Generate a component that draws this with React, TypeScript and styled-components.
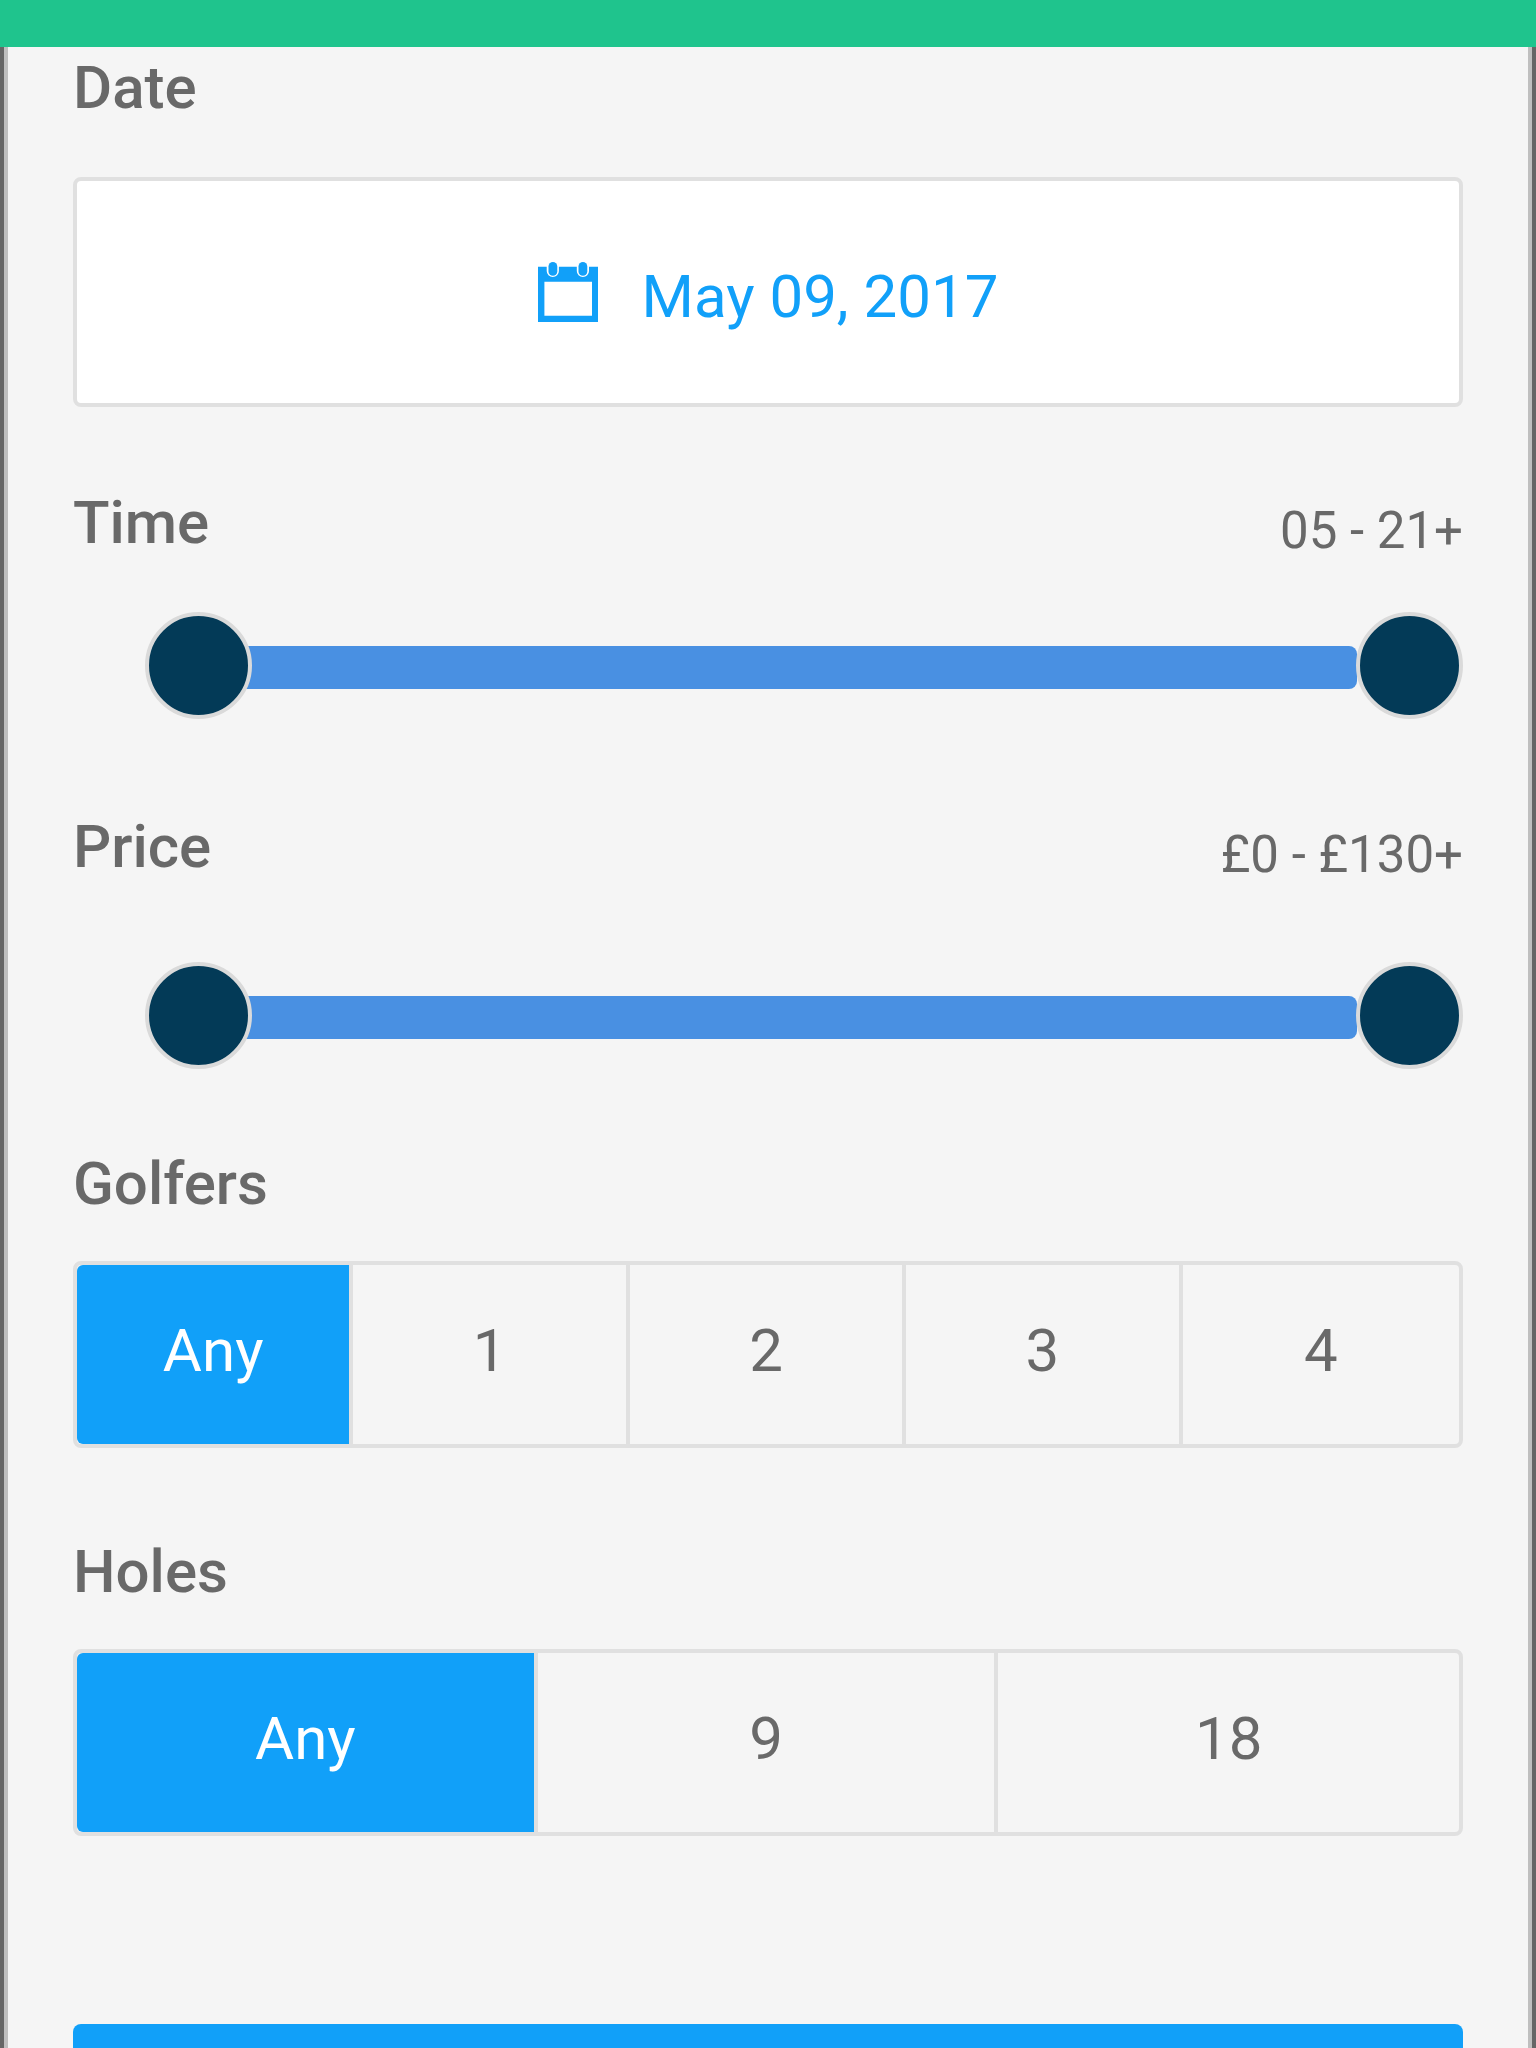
import React, { useState } from "react";
import styled, { createGlobalStyle } from "styled-components";

const color = {
  green: "#1fc48d",
  blue: "#11a0f9",
  track: "#4990e2",
  thumb: "#033a57",
  thumbEdge: "#dadada",
  line: "#e0e0e0",
  text: "#696969",
  surface: "#f5f5f5",
  edge: "#bfbfbf",
  frame: "#666666",
};

const THUMB = 107;

const GlobalStyle = createGlobalStyle`
  *, *::before, *::after { box-sizing: border-box; }
  body {
    margin: 0;
    background: ${color.frame};
    font-family: Roboto, "Liberation Sans", sans-serif;
  }
`;

const Screen = styled.div`
  display: flex;
  flex-direction: column;
  height: 100vh;
`;

const TopBar = styled.header`
  flex: none;
  height: 47px;
  background: ${color.green};
`;

const Panel = styled.main`
  flex: 1;
  min-height: 0;
  margin: 0 4px;
  border: solid ${color.edge};
  border-width: 0 4px;
  padding: 6px 65px 65px;
  background: ${color.surface};
  overflow-y: auto;
  scrollbar-width: none;
`;

const Section = styled.section<{ $space?: number }>`
  display: flex;
  flex-direction: column;
  margin-top: ${(p) => p.$space ?? 0}px;
`;

const Group = styled.fieldset<{ $space: number }>`
  margin: ${(p) => p.$space}px 0 0;
  border: 0;
  padding: 0;
  min-width: 0;
`;

const Heading = styled.h2`
  margin: 0;
  font-size: 60px;
  font-weight: 500;
  line-height: 70px;
  color: ${color.text};
`;

const Legend = styled.legend`
  padding: 0;
  margin-bottom: 42px;
  font-size: 60px;
  font-weight: 500;
  line-height: 70px;
  color: ${color.text};
`;

const HeadingRow = styled.div`
  display: flex;
  justify-content: space-between;
  align-items: flex-start;
`;

const RangeValue = styled.output`
  font-size: 51px;
  line-height: 86px;
  color: ${color.text};
`;

const DateButton = styled.button`
  display: flex;
  justify-content: center;
  align-items: flex-start;
  gap: 44px;
  margin-top: 54px;
  border: 4px solid ${color.line};
  border-radius: 8px;
  padding: 81px 0 71px;
  background: #ffffff;
  color: ${color.blue};
  font: inherit;
  font-size: 60px;
  line-height: 70px;
  cursor: pointer;
`;

const Slider = styled.div<{ $space: number }>`
  display: grid;
  margin: ${(p) => p.$space}px 0 0 72px;
  height: ${THUMB}px;

  & > * {
    grid-area: 1 / 1;
  }
`;

const Rail = styled.div`
  height: 43px;
  margin: 34px ${THUMB - 1}px 0 0;
  padding-left: 53px;
`;

const Fill = styled.div`
  height: 100%;
  border-radius: 8px;
  background: ${color.track};
`;

const Handle = styled.input`
  appearance: none;
  width: 100%;
  height: ${THUMB}px;
  margin: 0;
  background: transparent;
  pointer-events: none;
  z-index: 1;

  &::-webkit-slider-thumb {
    appearance: none;
    width: ${THUMB}px;
    height: ${THUMB}px;
    border: 4px solid ${color.thumbEdge};
    border-radius: 50%;
    background: ${color.thumb};
    pointer-events: auto;
    cursor: pointer;
  }
`;

const Segments = styled.div`
  display: grid;
  grid-auto-flow: column;
  grid-auto-columns: minmax(0, 1fr);
  height: 187px;
  border: 4px solid ${color.line};
  border-radius: 8px;
  overflow: hidden;
`;

const Segment = styled.label`
  display: flex;
  align-items: center;
  justify-content: center;
  padding-bottom: 8px;
  font-size: 60px;
  line-height: 70px;
  color: ${color.text};
  cursor: pointer;

  &:not(:last-child) {
    border-right: 4px solid ${color.line};
  }

  &:first-child {
    border-radius: 6px 0 0 6px;
  }

  &:has(input:checked) {
    background: ${color.blue};
    background-clip: padding-box;
    color: #ffffff;
  }
`;

const HiddenRadio = styled.input`
  appearance: none;
  width: 0;
  height: 0;
  margin: 0;
`;

const SubmitButton = styled.button`
  display: block;
  width: 100%;
  height: 187px;
  margin-top: 188px;
  border: 0;
  border-radius: 8px;
  background: ${color.blue};
  cursor: pointer;
`;

function CalendarIcon() {
  return (
    <svg width="60" height="60" viewBox="0 0 60 60" fill="currentColor" aria-hidden="true">
      <path
        fillRule="evenodd"
        d="M0 4.7H8.7V9A6.1 6.1 0 0 0 20.9 9V4.7H38.8V9A6.1 6.1 0 0 0 51 9V4.7H60V60H0ZM6.4 19.7V53.7H54V19.7Z"
      />
      <rect x="10.5" y="0" width="8.8" height="13.8" rx="4.4" />
      <rect x="40.5" y="0" width="8.8" height="13.8" rx="4.4" />
    </svg>
  );
}

type RangeProps = {
  title: string;
  max: number;
  min: number;
  space: number;
  sliderSpace: number;
  format: (n: number) => string;
};

function RangeFilter({ title, min, max, space, sliderSpace, format }: RangeProps) {
  const [low, setLow] = useState(min);
  const [high, setHigh] = useState(max);
  const percent = (n: number) => ((n - min) / (max - min)) * 100;

  return (
    <Section $space={space}>
      <HeadingRow>
        <Heading>{title}</Heading>
        <RangeValue>
          {format(low)} - {format(high)}
          {high === max ? "+" : ""}
        </RangeValue>
      </HeadingRow>
      <Slider $space={sliderSpace}>
        <Rail>
          <Fill
            style={{
              marginLeft: `${percent(low)}%`,
              marginRight: `${100 - percent(high)}%`,
            }}
          />
        </Rail>
        <Handle
          type="range"
          aria-label={`${title} from`}
          min={min}
          max={max}
          value={low}
          onChange={(e) => setLow(Math.min(Number(e.target.value), high))}
        />
        <Handle
          type="range"
          aria-label={`${title} to`}
          min={min}
          max={max}
          value={high}
          onChange={(e) => setHigh(Math.max(Number(e.target.value), low))}
        />
      </Slider>
    </Section>
  );
}

type ChoiceProps = { title: string; name: string; options: string[]; space: number };

function ChoiceFilter({ title, name, options, space }: ChoiceProps) {
  const [value, setValue] = useState(options[0]);

  return (
    <Group $space={space}>
      <Legend>{title}</Legend>
      <Segments>
        {options.map((option) => (
          <Segment key={option}>
            <HiddenRadio
              type="radio"
              name={name}
              value={option}
              checked={value === option}
              onChange={() => setValue(option)}
            />
            {option}
          </Segment>
        ))}
      </Segments>
    </Group>
  );
}

export default function App() {
  return (
    <>
      <GlobalStyle />
      <Screen>
        <TopBar />
        <Panel>
          <Section>
            <Heading>Date</Heading>
            <DateButton type="button">
              <CalendarIcon />
              May 09, 2017
            </DateButton>
          </Section>
          <RangeFilter
            title="Time"
            min={5}
            max={21}
            space={81}
            sliderSpace={38}
            format={(n) => String(n).padStart(2, "0")}
          />
          <RangeFilter
            title="Price"
            min={0}
            max={130}
            space={93}
            sliderSpace={64}
            format={(n) => `£${n}`}
          />
          <ChoiceFilter title="Golfers" name="golfers" options={["Any", "1", "2", "3", "4"]} space={80} />
          <ChoiceFilter title="Holes" name="holes" options={["Any", "9", "18"]} space={89} />
          <SubmitButton type="button" aria-label="Search" />
        </Panel>
      </Screen>
    </>
  );
}
